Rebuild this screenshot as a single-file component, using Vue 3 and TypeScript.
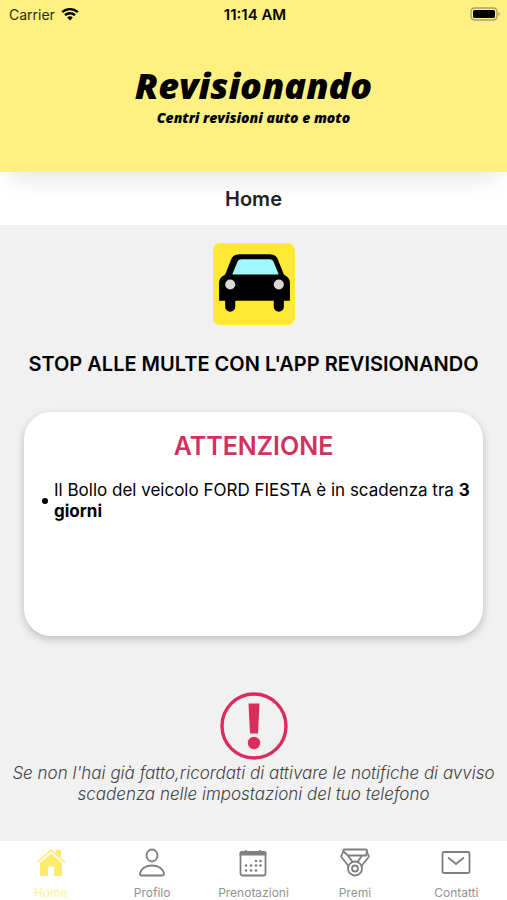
<script setup lang="ts">
type TabId = 'home' | 'profile' | 'bookings' | 'awards' | 'contacts'

interface Tab {
  id: TabId
  label: string
}

interface Notice {
  text: string
  remaining: string
}

const tabs: Tab[] = [
  { id: 'home', label: 'Home' },
  { id: 'profile', label: 'Profilo' },
  { id: 'bookings', label: 'Prenotazioni' },
  { id: 'awards', label: 'Premi' },
  { id: 'contacts', label: 'Contatti' },
]

const activeTab: TabId = 'home'

const notices: Notice[] = [
  { text: 'Il Bollo del veicolo FORD FIESTA è in scadenza tra', remaining: '3 giorni' },
]
</script>

<template>
  <div class="app">
    <header class="banner">
      <div class="status">
        <span class="carrier">
          Carrier
          <svg class="wifi" viewBox="0 0 18 14" aria-hidden="true">
            <path d="M1.2 5.2a11.3 11.3 0 0 1 15.6 0" />
            <path d="M4 8.2a7.2 7.2 0 0 1 10 0" />
            <path class="wifi-dot" d="M6.2 10.6a4 4 0 0 1 5.6 0L9 13.6z" />
          </svg>
        </span>
        <span class="clock">11:14 AM</span>
        <svg class="battery" viewBox="0 0 31 14" aria-hidden="true">
          <rect class="battery-case" x="1" y="1" width="26" height="12" rx="3.5" />
          <rect x="3" y="3" width="22" height="8" rx="1.5" />
          <path class="battery-tip" d="M28.5 5v4q3-2 0-4z" />
        </svg>
      </div>
      <div class="brand">
        <span class="brand-name">Revisionando</span>
        <span class="brand-tag">Centri revisioni auto e moto</span>
      </div>
    </header>

    <h1 class="title">Home</h1>

    <main class="content">
      <svg class="logo" viewBox="0 0 81 81" aria-hidden="true">
        <rect width="81" height="81" rx="7" fill="#ffe935" />
        <path d="M6 57V39q0-5 6-8l6-15q2-5 8-5h30q6 0 8 5l6 15q6 3 6 8v18h-6v6a5 5 0 0 1-10 0v-6H22v6a5 5 0 0 1-10 0v-6z" />
        <path d="M19 31l5-12q1-3 4-3h28q3 0 4 3l5 12z" fill="#a0f8ff" />
        <circle cx="17" cy="41" r="5" fill="#d8d8d5" />
        <circle cx="65" cy="41" r="5" fill="#d8d8d5" />
      </svg>
      <h2 class="slogan">STOP ALLE MULTE CON L'APP REVISIONANDO</h2>

      <section class="card" aria-labelledby="warning-title">
        <h3 id="warning-title" class="card-title">ATTENZIONE</h3>
        <ul class="notices">
          <li v-for="notice in notices" :key="notice.text" class="notice">
            <span class="bullet"></span>
            <span>{{ notice.text }} <strong>{{ notice.remaining }}</strong></span>
          </li>
        </ul>
      </section>

      <svg class="alert" viewBox="0 0 68 68" aria-hidden="true">
        <circle cx="34" cy="34" r="32" fill="none" stroke="#db2c5c" stroke-width="3.4" />
        <path d="M28.5 11.5h11l-1.5 30h-8z" fill="#db2c5c" />
        <circle cx="34" cy="51" r="6.2" fill="#db2c5c" />
      </svg>
      <p class="hint">Se non l'hai già fatto,ricordati di attivare le notifiche di avviso scadenza nelle impostazioni del tuo telefono</p>
    </main>

    <nav class="tabs">
      <a
        v-for="tab in tabs"
        :key="tab.id"
        :href="`#${tab.id}`"
        class="tab"
        :class="{ active: tab.id === activeTab }"
        :aria-current="tab.id === activeTab ? 'page' : undefined"
      >
        <svg class="tab-icon" viewBox="0 0 30 30" aria-hidden="true">
          <template v-if="tab.id === 'home'">
            <path class="solid" d="M4 15L15 5.5 26 15v13h-8v-9.500h-6V28H4z" />
            <path d="M1 14.5L15 2l14 12.5" stroke-width="1.6" />
            <path class="solid" d="M20 2h5v7.5l-5-4.5z" />
          </template>
          <template v-else-if="tab.id === 'profile'">
            <ellipse cx="15" cy="7.5" rx="5.5" ry="6" />
            <path d="M3 26C3.5 20.5 9 17.5 15 17.5S26.5 20.5 27 26Q27 27.500 25.5 27.5h-21Q3 27.5 3 26z" />
          </template>
          <template v-else-if="tab.id === 'bookings'">
            <path class="solid" d="M1.5 7.500V5q0-2 2-2h3q1-2 3 0h11q1-2 3 0h3q2 0 2 2v2.500z" />
            <rect x="2.5" y="4" width="25" height="23.5" rx="2" />
            <g class="solid">
              <circle cx="18" cy="13" r="1.3" />
              <circle cx="22.500" cy="13" r="1.3" />
              <circle cx="8" cy="17.5" r="1.3" />
              <circle cx="13" cy="17.5" r="1.3" />
              <circle cx="18" cy="17.5" r="1.3" />
              <circle cx="22.5" cy="17.5" r="1.3" />
              <circle cx="8" cy="22.5" r="1.3" />
              <circle cx="13" cy="22.5" r="1.3" />
              <circle cx="18" cy="22.5" r="1.3" />
            </g>
          </template>
          <template v-else-if="tab.id === 'awards'">
            <path d="M4.5 1.5h21q2 0 1.500 2L26 7.500H8L3.5 3.500Q3 1.500 4.500 1.500z" />
            <path d="M3.500 3L1.500 7.5q-.5 1 .2 2L9 18.500M26.500 3l2 4.500q.5 1-.2 2L21 18.500M8 7.500l4.500 6.500M22 7.500L17.500 14" />
            <circle cx="15" cy="20.5" r="7" />
            <circle cx="15" cy="20.5" r="3" />
          </template>
          <template v-else>
            <rect x="1.5" y="4" width="27" height="21" rx="1.5" />
            <path d="M7 9.5l8 6.5 8-6.5" />
          </template>
        </svg>
        <span>{{ tab.label }}</span>
      </a>
    </nav>
  </div>
</template>

<style>
body {
  margin: 0;
}
</style>

<style scoped>
.app {
  display: flex;
  flex-direction: column;
  min-height: 100vh;
  background: #f1f1f1;
  color: #000;
  font-family: Inter, "Liberation Sans", sans-serif;
}

.banner {
  position: relative;
  z-index: 1;
  padding-bottom: 44px;
  background: #fff181;
  box-shadow: 0 16px 24px -10px rgba(0, 0, 0, 0.11);
}

.status {
  display: grid;
  grid-template-columns: 1fr auto 1fr;
  align-items: center;
  height: 28px;
  padding: 0 6px 0 9px;
  font-size: 14px;
}

.carrier {
  display: flex;
  align-items: center;
  gap: 6px;
  color: #2b2915;
}

.wifi {
  width: 18px;
  height: 14px;
  fill: none;
  stroke: #000;
  stroke-width: 2.4;
}

.wifi-dot {
  fill: #000;
  stroke: none;
}

.clock {
  font-size: 15px;
  font-weight: 600;
}

.battery {
  justify-self: end;
  width: 31px;
  height: 14px;
}

.battery-case {
  fill: none;
  stroke: #aaa15b;
  stroke-width: 1.4;
}

.battery-tip {
  fill: #aaa15b;
}

.brand {
  display: flex;
  flex-direction: column;
  align-items: center;
  padding-top: 36px;
  font-family: "Open Sans", "Noto Sans", sans-serif;
  font-style: italic;
  font-weight: 800;
}

.brand-name {
  font-size: 36px;
  line-height: 44px;
}

.brand-tag {
  font-size: 14px;
  line-height: 20px;
}

.title {
  margin: 0;
  padding-top: 1px;
  background: #fff;
  color: #222;
  font-size: 20px;
  font-weight: 600;
  line-height: 52px;
  text-align: center;
}

.content {
  display: flex;
  flex: 1;
  flex-direction: column;
  align-items: center;
  padding: 18px 12px 0;
}

.logo {
  width: 82px;
  height: 82px;
}

.slogan {
  margin: 26px 0 35px;
  font-size: 20px;
  font-weight: 600;
  line-height: 26px;
  text-align: center;
}

.card {
  box-sizing: border-box;
  align-self: stretch;
  min-height: 224px;
  margin: 0 12px;
  padding: 18px 12px;
  border-radius: 27px;
  background: #fff;
  box-shadow: 0 3px 8px rgba(0, 0, 0, 0.22);
}

.card-title {
  margin: 0;
  color: #d4305e;
  font-size: 25px;
  font-weight: 600;
  line-height: 32px;
  text-align: center;
}

.notices {
  margin: 18px 0 0;
  padding: 0 0 0 6px;
  list-style: none;
}

.notice {
  display: flex;
  align-items: center;
  gap: 6px;
  font-size: 17px;
  line-height: 21px;
}

.bullet {
  flex: none;
  width: 6px;
  height: 6px;
  border-radius: 50%;
  background: #000;
}

.alert {
  width: 68px;
  height: 68px;
  margin-top: 56px;
}

.hint {
  margin: 3px 0 0;
  color: #444;
  font-size: 17px;
  font-style: italic;
  font-weight: 300;
  line-height: 21px;
  text-align: center;
}

.tabs {
  display: grid;
  grid-template-columns: repeat(5, 1fr);
  height: 59px;
  background: #fff;
}

.tab {
  display: flex;
  flex-direction: column;
  align-items: center;
  padding-top: 7px;
  gap: 7px;
  color: #929292;
  font-size: 12px;
  line-height: 16px;
  text-decoration: none;
}

.tab.active {
  color: #fff29a;
}

.tab-icon {
  width: 30px;
  height: 30px;
  fill: none;
  stroke: #7f7f7f;
  stroke-width: 1.8;
  stroke-linejoin: round;
}

.active .tab-icon {
  stroke: #fdeb6b;
}

.tab-icon .solid {
  fill: #7f7f7f;
  stroke: none;
}

.active .tab-icon .solid {
  fill: #fdeb6b;
}
</style>
